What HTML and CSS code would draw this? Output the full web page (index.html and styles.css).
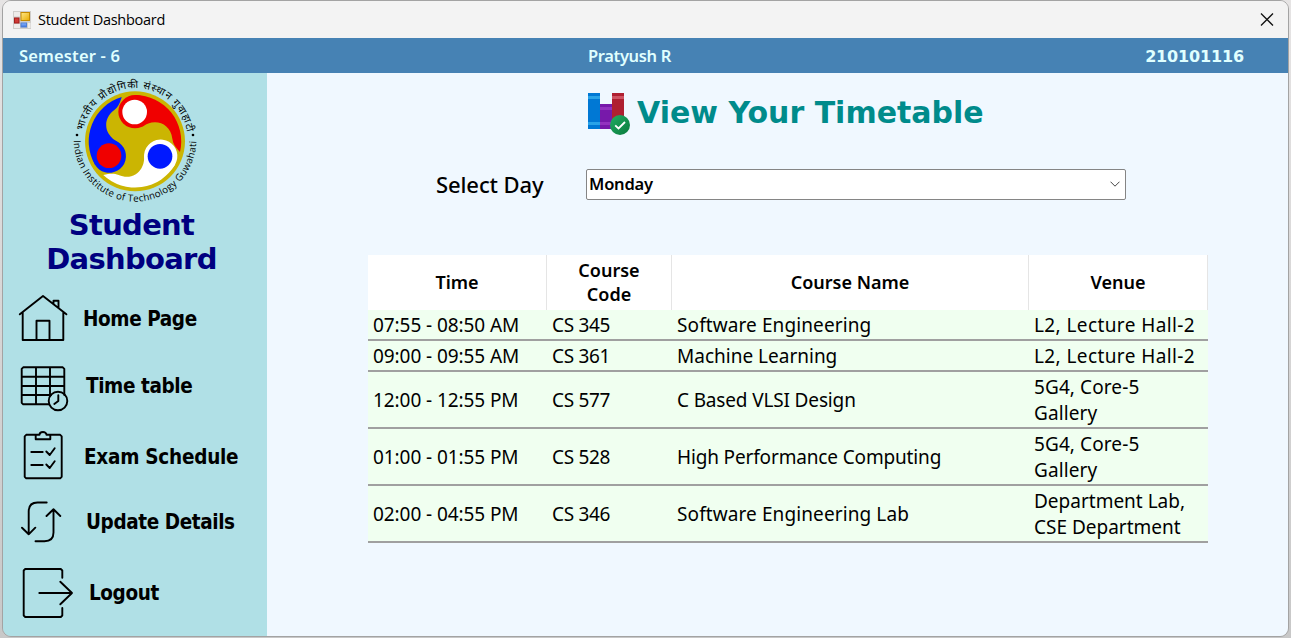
FILE: index.html
```html
<!DOCTYPE html>
<html lang="en">
<head>
<meta charset="utf-8">
<title>Student Dashboard</title>
<link rel="stylesheet" href="styles.css">
</head>
<body>
<div class="window">
  <header class="titlebar">
    <svg class="app-icon" width="18" height="18" viewBox="0 0 18 18">
      <defs>
        <linearGradient id="gy" x1="0" y1="0" x2="1" y2="1"><stop offset="0" stop-color="#ffe98a"/><stop offset="1" stop-color="#e9ab00"/></linearGradient>
        <linearGradient id="gb" x1="0" y1="0" x2="0" y2="1"><stop offset="0" stop-color="#8db8ff"/><stop offset="1" stop-color="#3c72dc"/></linearGradient>
      </defs>
      <rect width="18" height="18" fill="#cfcdca"/>
      <rect x="1" y="1" width="6" height="4.500" fill="#eeecea"/>
      <rect x="1" y="13" width="6" height="4" fill="#eeecea"/>
      <rect x="15" y="12" width="2.500" height="5" fill="#eeecea"/>
      <rect x="8" y="1.500" width="8.500" height="8" fill="url(#gy)" stroke="#c58a00"/>
      <rect x="1.500" y="7" width="4.500" height="5" fill="#cf3a35" stroke="#a31d1b"/>
      <rect x="8" y="12" width="5.500" height="4" fill="url(#gb)" stroke="#4f7fd6"/>
    </svg>
    <span class="title">Student Dashboard</span>
    <svg class="close" width="14" height="14" viewBox="0 0 14 14"><path d="M1 0.500L13 12.500M13 0.500L1 12.500" stroke="#111" stroke-width="1.300" fill="none"/></svg>
  </header>
  <div class="infobar">
    <span class="semester">Semester - 6</span>
    <span class="student">Pratyush R</span>
    <span class="roll">210101116</span>
  </div>
  <div class="body">
    <aside class="sidebar">
      <svg class="emblem" width="140" height="134" viewBox="0 0 420 402">
        <defs>
          <path id="arcTop" d="M48.500 201A158.500 158.500 0 0 1 365.500 201"/>
          <path id="arcBottom" d="M23 196A184 187 0 0 0 391 196"/>
          <path id="petal" d="M0 -139A139 139 0 0 1 135 32C122 18 114 8 112 -8C108 -40 85 -57 60 -57C45 -57 35 -52 20 -44L0 -88Z"/>
        </defs>
        <circle cx="207" cy="202" r="150" fill="#cbb502"/>
        <g transform="translate(207 202)">
          <g fill="#0019ff" transform="rotate(-120)"><use href="#petal"/><circle cy="-89" r="50"/></g>
          <g fill="#fff" transform="rotate(120)"><use href="#petal"/><circle cy="-89" r="50"/></g>
          <g fill="#f00000"><use href="#petal"/><circle cy="-89" r="50"/></g>
          <circle cx="-1" cy="-88" r="37" fill="#fff"/>
          <circle cx="-78" cy="43" r="37" fill="#f00000"/>
          <circle cx="75" cy="45" r="37" fill="#0019ff"/>
        </g>
        <text class="ring-hi"><textPath href="#arcTop" startOffset="31" textLength="440">भारतीय प्रौद्योगिकी संस्थान गुवाहाटी</textPath></text>
        <text class="ring-en"><textPath href="#arcBottom" startOffset="3" textLength="574">Indian Institute of Technology Guwahati</textPath></text>
        <circle cx="33" cy="183" r="4"/><circle cx="381" cy="183" r="4"/>
      </svg>
      <h1 class="brand">Student<br>Dashboard</h1>
      <nav class="nav">
        <a class="item home">
          <svg width="58" height="52" viewBox="0 0 58 52"><path d="M1.800 22.300L25 4L48.400 22.300M4.700 20V48H45.300V20M18.500 48V28.800H31.500V48M35.500 12V8.800H40.500V16"/></svg>
          <span>Home Page</span>
        </a>
        <a class="item time">
          <svg width="58" height="52" viewBox="0 0 58 52"><path d="M31 43.300H5.200L3.700 41.800V7.800L5.200 6.300H44.800L46.300 7.800V34M3.700 15.700H46.300M3.700 25H46.300M3.700 34H33M18 6.300V43.300M32 6.300V35"/><circle cx="40" cy="40" r="9.300"/><path d="M40.300 34.300V40L36.300 43"/></svg>
          <span>Time table</span>
        </a>
        <a class="item exam">
          <svg width="58" height="52" viewBox="0 0 58 52"><path d="M17.700 4.800H8.200L6.700 6.300V46.800L8.200 48.300H42.200L43.700 46.800V6.300L42.200 4.800H32.300M17.700 4.800V9.300H32.300V4.800H28.500C28.500 1 21.500 1 21.500 4.800ZM13.300 22H24.700M28.300 21.500L31.700 25L36.700 18.300M13.300 35H24.700M28.300 34.500L31.700 38L36.700 31.300"/></svg>
          <span>Exam Schedule</span>
        </a>
        <a class="item update">
          <svg width="58" height="52" viewBox="0 0 58 52"><path d="M28.700 6.500H19.500Q10.700 6.500 10.700 15.500V38.300M4 31.700L10.700 38.300L17.300 31.700M17.500 45.200H26.500Q35.500 45.200 35.500 36.500V13.300M28.500 20L35.500 13.300L42.300 20"/></svg>
          <span>Update Details</span>
        </a>
        <a class="item logout">
          <svg width="58" height="54" viewBox="0 0 58 54"><path d="M44.300 11.700V4.500L42.800 3H7.200L5.700 4.500V49.500L7.200 51H42.800L44.300 49.500V42M21.300 27H54M42.300 15.700L54 27L42.300 38.300"/></svg>
          <span>Logout</span>
        </a>
      </nav>
    </aside>
    <main class="content">
      <div class="heading">
        <svg width="43" height="43" viewBox="0 0 43 43">
          <defs><linearGradient id="gg" x1="0" y1="0" x2="1" y2="1"><stop offset="0" stop-color="#21ad64"/><stop offset="1" stop-color="#0a7a3c"/></linearGradient></defs>
          <path fill="#0078d4" d="M0 0H12V36H0Z"/><path fill="#29a3e8" d="M0 3H12V6H0ZM0 29H12V32H0Z"/>
          <path fill="#7719aa" d="M12 11H24V36H12Z"/><path fill="#9332bf" d="M12 14H24V17H12ZM12 29H24V32H12Z"/>
          <path fill="#af2031" d="M24 0H36V36H24Z"/><path fill="#cf5362" d="M24 3H36V6H24Z"/>
          <circle cx="32" cy="32" r="10" fill="url(#gg)"/>
          <path d="M27.200 32.300L30.500 35.500L37 29" fill="none" stroke="#fff" stroke-width="1.800"/>
        </svg>
        <h2>View Your Timetable</h2>
      </div>
      <div class="picker">
        <label>Select Day</label>
        <div class="select"><span>Monday</span>
          <svg width="10" height="6" viewBox="0 0 10 6"><path d="M.5.700L5 5.200L9.500.700" fill="none" stroke="#444"/></svg>
        </div>
      </div>
      <table class="timetable">
        <thead><tr><th class="c-time">Time</th><th class="c-code">Course<br>Code</th><th class="c-name">Course Name</th><th class="c-venue">Venue</th></tr></thead>
        <tbody>
          <tr><td class="t">07:55 - 08:50 AM</td><td class="code">CS 345</td><td class="v">Software Engineering</td><td class="hall">L2, Lecture Hall-2</td></tr>
          <tr><td class="t">09:00 - 09:55 AM</td><td class="code">CS 361</td><td>Machine Learning</td><td class="hall">L2, Lecture Hall-2</td></tr>
          <tr><td class="t">12:00 - 12:55 PM</td><td class="code">CS 577</td><td class="tight">C Based VLSI Design</td><td class="v">5G4, Core-5<br>Gallery</td></tr>
          <tr><td class="t">01:00 - 01:55 PM</td><td class="code">CS 528</td><td class="tight">High Performance Computing</td><td class="v">5G4, Core-5<br>Gallery</td></tr>
          <tr><td class="t">02:00 - 04:55 PM</td><td class="code">CS 346</td><td class="v">Software Engineering Lab</td><td>Department Lab,<br>CSE Department</td></tr>
        </tbody>
      </table>
    </main>
  </div>
</div>
</body>
</html>
```
FILE: styles.css
```css
* { box-sizing: border-box; }
body {
  margin: 0;
  height: 638px;
  padding: 0 2px 1px;
  background: linear-gradient(#e6e4e4, #c8c8c8);
  font-family: "Noto Sans", "Open Sans", sans-serif;
  color: #000;
  overflow: hidden;
}
.window {
  width: 1287px;
  height: 637px;
  border: 1px solid #a3a3a3;
  border-radius: 9px;
  overflow: hidden;
  display: flex;
  flex-direction: column;
}
.titlebar {
  height: 37px;
  flex: none;
  display: flex;
  align-items: center;
  padding: 0 14px 0 10px;
  background: #f3f3f3;
}
.title { margin-left: 7px; font: 14.5px "Open Sans", sans-serif; letter-spacing: -0.27px; }
.close { margin-left: auto; }
.infobar {
  height: 35px;
  flex: none;
  display: grid;
  grid-template-columns: 569px 1fr auto;
  align-items: center;
  padding: 0 44px 0 16px;
  background: #4682b4;
  color: #e0ffff;
  font-size: 16.5px;
  font-weight: 600;
}
.semester { letter-spacing: 0.15px; }
.student { letter-spacing: -0.35px; }
.roll { font: bold 16px "DejaVu Sans", sans-serif; letter-spacing: -0.15px; padding-top: 1px; }
.body { flex: 1; display: flex; min-height: 0; }
.sidebar { width: 264px; background: #b0e0e6; padding-top: 1px; }
.emblem { display: block; margin-left: 63px; }
.ring-hi { font: 31px "Noto Sans Devanagari", "Noto Sans", sans-serif; }
.ring-en { font: 29px "Open Sans", sans-serif; }
.brand {
  margin: 0 7px 0 0;
  height: 68px;
  text-align: center;
  color: #000080;
  font: bold 29px/34px "DejaVu Sans", sans-serif;
  letter-spacing: -0.7px;
}
.nav { padding: 16px 0 0 15px; }
.item { display: flex; align-items: center; font: bold 20.5px "DejaVu Sans Condensed", "DejaVu Sans", sans-serif; letter-spacing: -0.4px; }
.item svg { flex: none; fill: none; stroke: #000; stroke-width: 1.9; stroke-linejoin: round; stroke-linecap: round; }
.item span { margin-left: 8px; padding-top: 2px; white-space: nowrap; }
.home span { margin-left: 7px; }
.time { margin-top: 17px; }
.time span { margin-left: 10px; padding: 0 0 2px; }
.exam { margin-top: 17px; }
.exam span { letter-spacing: -0.25px; }
.update { margin-top: 14px; }
.update span { margin-left: 10px; padding-top: 0; }
.logout { margin-top: 18px; }
.logout span { margin-left: 13px; padding-top: 0; }
.content { flex: 1; background: #f0f8ff; padding: 20px 0 0 101px; }
.heading { display: flex; padding-left: 220px; height: 76px; }
.heading h2 { margin: 1px 0 0 6px; color: #008b8b; font: bold 30px/38px "DejaVu Sans", sans-serif; white-space: nowrap; }
.picker { display: flex; height: 31px; padding-left: 68px; align-items: center; }
.picker label { width: 150px; padding-bottom: 2px; font-size: 22px; font-weight: 500; letter-spacing: -0.1px; }
.select {
  width: 540px;
  height: 31px;
  display: flex;
  align-items: center;
  justify-content: space-between;
  padding: 0 5px 2px 2px;
  border: 1px solid #858585;
  border-radius: 2px;
  background: #fff;
  font-size: 16.5px;
  font-weight: 600;
  letter-spacing: -0.2px;
}
.timetable {
  width: 840px;
  margin-top: 55px;
  table-layout: fixed;
  border-collapse: separate;
  border-spacing: 0;
  font-size: 19px;
  line-height: 26px;
}
.timetable th {
  height: 55px;
  padding: 0 0 2px;
  background: #fff;
  border-right: 1px solid #e5e5e5;
  font-size: 18px;
  font-weight: 600;
  line-height: 24px;
}
.c-time, .c-venue { width: 179px; }
.c-code { width: 125px; }
.c-name { width: 357px; }
.timetable td {
  padding: 2px 0 1px 5px;
  background: #f0fff0;
  border-bottom: 2px solid #a0a0a0;
  white-space: nowrap;
}
.timetable .t { letter-spacing: -0.08px; }
.timetable .code { letter-spacing: -0.3px; }
.timetable .tight { letter-spacing: -0.15px; }
.timetable .hall { letter-spacing: 0.4px; }
.timetable .v { letter-spacing: 0.1px; }
```
